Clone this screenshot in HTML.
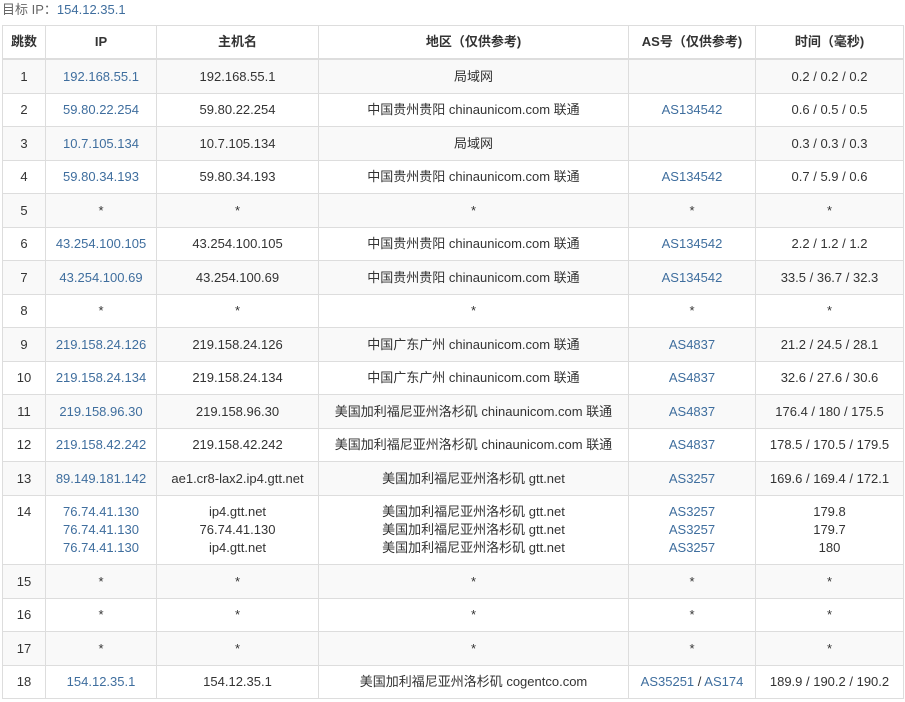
<!DOCTYPE html>
<html><head><meta charset="utf-8"><style>
body{margin:0;background:#fff;font-family:"Liberation Sans","Noto Sans CJK SC",sans-serif;font-size:13px;color:#333;width:905px;height:702px;overflow:hidden}
.t{position:absolute;left:2px;top:1px;color:#666;font-size:13px;line-height:18px}
.t a{color:#3f6e9e}
table{position:absolute;left:2px;top:25px;border-collapse:collapse;width:901px;table-layout:fixed}
td,th{border:1px solid #ddd;text-align:center;padding:7.5px 2px 7px;line-height:18px;white-space:nowrap}
th{font-weight:bold;border-bottom:2px solid #ddd;padding:7px 2px 7px}
tbody tr:nth-child(odd){background:#f9f9f9}
a{color:#3f6e9e;text-decoration:none}
</style></head><body>
<div class="t">目标 IP：<a>154.12.35.1</a></div>
<table>
<colgroup><col style="width:43px"><col style="width:111px"><col style="width:162px"><col style="width:310px"><col style="width:127px"><col style="width:148px"></colgroup>
<thead><tr><th>跳数</th><th>IP</th><th>主机名</th><th>地区（仅供参考)</th><th>AS号（仅供参考)</th><th>时间（毫秒)</th></tr></thead>
<tbody>
<tr><td>1</td><td><a>192.168.55.1</a></td><td>192.168.55.1</td><td>局域网</td><td></td><td>0.2 / 0.2 / 0.2</td></tr>
<tr><td>2</td><td><a>59.80.22.254</a></td><td>59.80.22.254</td><td>中国贵州贵阳 chinaunicom.com 联通</td><td><a>AS134542</a></td><td>0.6 / 0.5 / 0.5</td></tr>
<tr><td>3</td><td><a>10.7.105.134</a></td><td>10.7.105.134</td><td>局域网</td><td></td><td>0.3 / 0.3 / 0.3</td></tr>
<tr><td>4</td><td><a>59.80.34.193</a></td><td>59.80.34.193</td><td>中国贵州贵阳 chinaunicom.com 联通</td><td><a>AS134542</a></td><td>0.7 / 5.9 / 0.6</td></tr>
<tr><td>5</td><td>*</td><td>*</td><td>*</td><td>*</td><td>*</td></tr>
<tr><td>6</td><td><a>43.254.100.105</a></td><td>43.254.100.105</td><td>中国贵州贵阳 chinaunicom.com 联通</td><td><a>AS134542</a></td><td>2.2 / 1.2 / 1.2</td></tr>
<tr><td>7</td><td><a>43.254.100.69</a></td><td>43.254.100.69</td><td>中国贵州贵阳 chinaunicom.com 联通</td><td><a>AS134542</a></td><td>33.5 / 36.7 / 32.3</td></tr>
<tr><td>8</td><td>*</td><td>*</td><td>*</td><td>*</td><td>*</td></tr>
<tr><td>9</td><td><a>219.158.24.126</a></td><td>219.158.24.126</td><td>中国广东广州 chinaunicom.com 联通</td><td><a>AS4837</a></td><td>21.2 / 24.5 / 28.1</td></tr>
<tr><td>10</td><td><a>219.158.24.134</a></td><td>219.158.24.134</td><td>中国广东广州 chinaunicom.com 联通</td><td><a>AS4837</a></td><td>32.6 / 27.6 / 30.6</td></tr>
<tr><td>11</td><td><a>219.158.96.30</a></td><td>219.158.96.30</td><td>美国加利福尼亚州洛杉矶 chinaunicom.com 联通</td><td><a>AS4837</a></td><td>176.4 / 180 / 175.5</td></tr>
<tr><td>12</td><td><a>219.158.42.242</a></td><td>219.158.42.242</td><td>美国加利福尼亚州洛杉矶 chinaunicom.com 联通</td><td><a>AS4837</a></td><td>178.5 / 170.5 / 179.5</td></tr>
<tr><td>13</td><td><a>89.149.181.142</a></td><td>ae1.cr8-lax2.ip4.gtt.net</td><td>美国加利福尼亚州洛杉矶 gtt.net</td><td><a>AS3257</a></td><td>169.6 / 169.4 / 172.1</td></tr>
<tr><td style="vertical-align:top">14</td><td><a>76.74.41.130</a><br><a>76.74.41.130</a><br><a>76.74.41.130</a></td><td>ip4.gtt.net<br>76.74.41.130<br>ip4.gtt.net</td><td>美国加利福尼亚州洛杉矶 gtt.net<br>美国加利福尼亚州洛杉矶 gtt.net<br>美国加利福尼亚州洛杉矶 gtt.net</td><td><a>AS3257</a><br><a>AS3257</a><br><a>AS3257</a></td><td>179.8<br>179.7<br>180</td></tr>
<tr><td>15</td><td>*</td><td>*</td><td>*</td><td>*</td><td>*</td></tr>
<tr><td>16</td><td>*</td><td>*</td><td>*</td><td>*</td><td>*</td></tr>
<tr><td>17</td><td>*</td><td>*</td><td>*</td><td>*</td><td>*</td></tr>
<tr><td>18</td><td><a>154.12.35.1</a></td><td>154.12.35.1</td><td>美国加利福尼亚州洛杉矶 cogentco.com</td><td><a>AS35251</a> / <a>AS174</a></td><td>189.9 / 190.2 / 190.2</td></tr>
</tbody></table>
</body></html>
